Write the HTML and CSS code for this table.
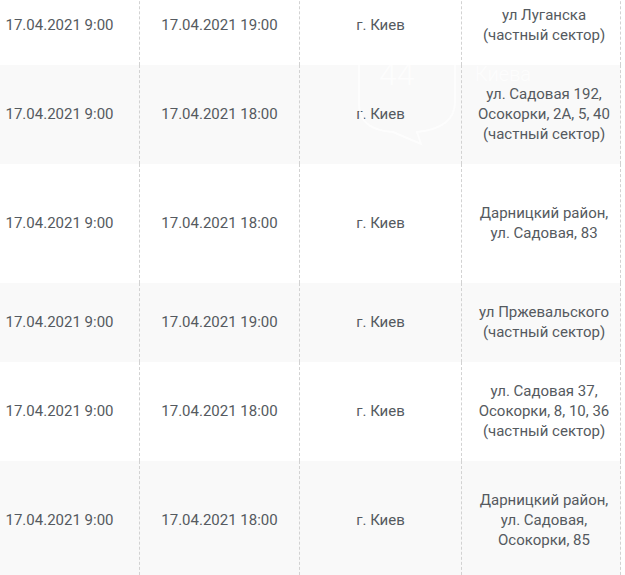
FILE: index.html
```html
<!DOCTYPE html>
<html lang="ru">
<head>
<meta charset="utf-8">
<link rel="stylesheet" href="styles.css">
</head>
<body>
<div class="wrap">
  <table class="schedule">
    <colgroup>
      <col class="c1"><col class="c2"><col class="c3"><col class="c4">
    </colgroup>
    <tbody>
      <tr class="first">
        <td>17.04.2021 9:00</td>
        <td>17.04.2021 19:00</td>
        <td>г. Киев</td>
        <td class="addr">ул Луганска<br>(частный сектор)</td>
      </tr>
      <tr class="alt">
        <td>17.04.2021 9:00</td>
        <td>17.04.2021 18:00</td>
        <td>г. Киев</td>
        <td class="addr">ул. Садовая 192,<br>Осокорки, 2А, 5, 40<br>(частный сектор)</td>
      </tr>
      <tr class="tall">
        <td>17.04.2021 9:00</td>
        <td>17.04.2021 18:00</td>
        <td>г. Киев</td>
        <td class="addr">Дарницкий район,<br>ул. Садовая, 83</td>
      </tr>
      <tr class="alt">
        <td>17.04.2021 9:00</td>
        <td>17.04.2021 19:00</td>
        <td>г. Киев</td>
        <td class="addr">ул Пржевальского<br>(частный сектор)</td>
      </tr>
      <tr>
        <td>17.04.2021 9:00</td>
        <td>17.04.2021 18:00</td>
        <td>г. Киев</td>
        <td class="addr">ул. Садовая 37,<br>Осокорки, 8, 10, 36<br>(частный сектор)</td>
      </tr>
      <tr class="alt tall">
        <td>17.04.2021 9:00</td>
        <td>17.04.2021 18:00</td>
        <td>г. Киев</td>
        <td class="addr">Дарницкий район,<br>ул. Садовая,<br>Осокорки, 85</td>
      </tr>
    </tbody>
  </table>
  <svg class="watermark" width="200" height="100" viewBox="0 0 200 100" aria-hidden="true">
    <path d="M2 10 V54 Q2 80 36 82 L64 94 L60 82 Q98 78 98 52 V10" fill="none" stroke="#ffffff" stroke-width="2"/>
    <text x="22" y="35" class="wm-num">44</text>
    <text x="118" y="31" class="wm-city">Киева</text>
  </svg>
</div>
</body>
</html>
```

FILE: styles.css
```css
html, body {
  margin: 0;
  padding: 0;
  background: #ffffff;
}

.wrap {
  position: relative;
  width: 625px;
  height: 575px;
  overflow: hidden;
}

.schedule {
  border-collapse: collapse;
  table-layout: fixed;
  width: 641px;
  margin-left: -21px;
  margin-top: -14px;
  font-family: Roboto, "Liberation Sans", sans-serif;
  font-size: 15px;
  line-height: 20px;
  color: #555a60;
}

.c1 { width: 160px; }
.c2 { width: 160px; }
.c3 { width: 162px; }
.c4 { width: 159px; }

.schedule td {
  padding: 19.5px 2px;
  text-align: center;
  vertical-align: middle;
  border-left: 1px dashed #d2d2d2;
  border-right: 1px dashed #d2d2d2;
}

.schedule tr.first td {
  padding-top: 19px;
}

.schedule td.addr {
  padding-left: 6px;
  padding-right: 0;
}

.schedule tr.alt td {
  background: #f9f9f9;
}

.schedule tr.tall td {
  height: 80px;
}

.watermark {
  position: absolute;
  left: 357px;
  top: 50px;
  opacity: 0.75;
}

.wm-num {
  font-family: Roboto, "Liberation Sans", sans-serif;
  font-size: 32px;
  font-weight: 300;
  fill: #ffffff;
}

.wm-city {
  font-family: Roboto, "Liberation Sans", sans-serif;
  font-size: 20px;
  font-weight: 300;
  fill: #ffffff;
}
```
